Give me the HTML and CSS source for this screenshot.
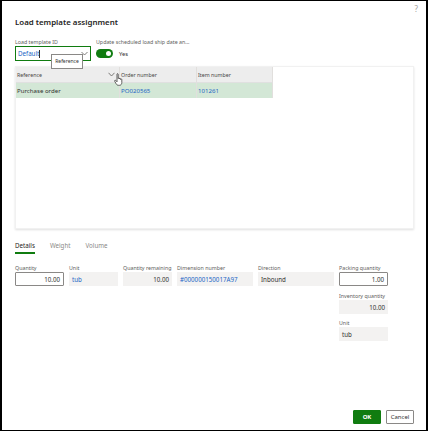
FILE: index.html
```html
<!DOCTYPE html>
<html>
<head>
<meta charset="utf-8">
<link rel="stylesheet" href="styles.css">
</head>
<body>
<div class="dialog">
  <div class="help">?</div>
  <h1 class="title">Load template assignment</h1>
  <div class="top-fields">
    <div class="field f-template">
      <div class="label">Load template ID</div>
      <div class="combo">
        <span class="combo-text">Default</span><span class="caret"></span>
        <svg class="combo-chev" width="7" height="5" viewBox="0 0 7 5"><path d="M0.5 1 L3.5 4 L6.5 1" fill="none" stroke="#605e5c" stroke-width="0.8"/></svg>
      </div>
      <div class="tooltip">Reference</div>
    </div>
    <div class="field f-update">
      <div class="label">Update scheduled load ship date an...</div>
      <div class="toggle-row">
        <span class="toggle"><span class="knob"></span></span>
        <span class="toggle-text">Yes</span>
      </div>
    </div>
  </div>

  <div class="grid">
    <div class="grow head">
      <div class="cell c1">Reference
        <svg class="sort-chev" width="7" height="5" viewBox="0 0 7 5"><path d="M0.5 0.8 L3.5 4 L6.5 0.8" fill="none" stroke="#605e5c" stroke-width="0.8"/></svg>
        <svg class="hand" width="10" height="13" viewBox="0 0 10 13"><path d="M3 1.2 C3 0.5 4.2 0.5 4.2 1.2 L4.2 5.5 C4.2 4.8 5.4 4.8 5.4 5.5 L5.4 6 C5.4 5.3 6.6 5.3 6.6 6 L6.6 6.5 C6.6 5.8 7.8 5.8 7.8 6.5 L7.8 9.5 C7.8 11 7 12.3 5.5 12.3 L4.5 12.3 C3.2 12.3 2.6 11.6 2 10.6 L0.7 8.2 C0.3 7.5 1.2 6.9 1.8 7.5 L3 8.8 Z" fill="#fff" stroke="#3b3a39" stroke-width="0.8" stroke-linejoin="round"/></svg>
      </div>
      <div class="cell c2">Order number</div>
      <div class="cell c3">Item number</div>
    </div>
    <div class="grow sel">
      <div class="cell c1">Purchase order</div>
      <div class="cell c2 link">PO020565</div>
      <div class="cell c3 link">101261</div>
    </div>
  </div>

  <div class="tabs">
    <div class="tab active">Details</div>
    <div class="tab">Weight</div>
    <div class="tab">Volume</div>
  </div>

  <div class="details">
    <div class="col w-s">
      <div class="label">Quantity</div>
      <div class="input num">10.00</div>
    </div>
    <div class="col w-s">
      <div class="label">Unit</div>
      <div class="ro link">tub</div>
    </div>
    <div class="col w-s">
      <div class="label">Quantity remaining</div>
      <div class="ro num">10.00</div>
    </div>
    <div class="col w-l">
      <div class="label">Dimension number</div>
      <div class="ro link">#000000150017A97</div>
    </div>
    <div class="col w-l">
      <div class="label">Direction</div>
      <div class="ro">Inbound</div>
    </div>
    <div class="col w-s stack">
      <div class="label">Packing quantity</div>
      <div class="input num">1.00</div>
      <div class="label gap">Inventory quantity</div>
      <div class="ro num">10.00</div>
      <div class="label gap2">Unit</div>
      <div class="ro">tub</div>
    </div>
  </div>

  <div class="footer">
    <button class="btn primary">OK</button>
    <button class="btn">Cancel</button>
  </div>
</div>
</body>
</html>
```

FILE: styles.css
```css
html, body {
  margin: 0;
  padding: 0;
  background: #fff;
}
body {
  font-family: "Noto Sans", "Open Sans", sans-serif;
  color: #323130;
}
.dialog {
  position: relative;
  box-sizing: border-box;
  width: 428px;
  height: 431px;
  border-style: solid;
  border-color: #000;
  border-width: 1px 2px 1px 2px;
  padding: 14px 12px 6px 13px;
  display: flex;
  flex-direction: column;
}
.help {
  position: absolute;
  top: 2px;
  right: 8px;
  font-size: 8px;
  color: #a19f9d;
}
.title {
  margin: 0;
  font-size: 7.9px;
  line-height: 14px;
  font-weight: 600;
  color: #252423;
}
.label {
  font-size: 5.3px;
  line-height: 8px;
  color: #605e5c;
  white-space: nowrap;
}
.top-fields {
  display: flex;
  gap: 5px;
  margin-top: 9px;
}
.f-template {
  position: relative;
  width: 76px;
}
.combo {
  position: relative;
  box-sizing: border-box;
  height: 15px;
  border: 1px solid #107c10;
  display: flex;
  align-items: center;
  padding-left: 2px;
  font-size: 6.2px;
  color: #2266c5;
}
.caret {
  width: 0.5px;
  height: 8px;
  background: #323130;
}
.combo-chev {
  position: absolute;
  right: 2px;
  top: 4px;
}
.tooltip {
  position: absolute;
  left: 36px;
  top: 16px;
  box-sizing: border-box;
  width: 32px;
  height: 15px;
  background: #fff;
  border: 1px solid #8a8886;
  font-size: 5px;
  line-height: 13px;
  text-align: center;
  color: #323130;
  z-index: 3;
}
.toggle-row {
  display: flex;
  align-items: center;
  gap: 6px;
  height: 15px;
}
.toggle {
  position: relative;
  width: 17px;
  height: 9px;
  border-radius: 5px;
  background: #107c10;
}
.knob {
  position: absolute;
  right: 2px;
  top: 2px;
  width: 5px;
  height: 5px;
  border-radius: 50%;
  background: #fff;
}
.toggle-text {
  font-size: 5.8px;
  color: #323130;
}
.grid {
  margin-top: 5px;
  height: 163px;
  box-sizing: border-box;
  border: 1px solid #f1f1f1;
  box-shadow: 0 1px 2px rgba(0, 0, 0, 0.12);
  background: #fff;
}
.grow {
  display: flex;
  height: 15px;
  width: 257px;
}
.grow.head {
  background: #ededed;
  border-bottom: 0.5px solid #e0e0e0;
}
.grow.sel {
  background: #d3e7d6;
}
.cell {
  box-sizing: border-box;
  display: flex;
  align-items: center;
  padding-left: 1px;
  border-right: 1px solid #e1dfdd;
  font-size: 6.1px;
  white-space: nowrap;
}
.head .cell {
  font-size: 5.3px;
  color: #484644;
}
.c1 {
  position: relative;
  width: 104px;
}
.c2 { width: 77px; }
.c3 { width: 76px; }
.link { color: #2266c5; }
.sort-chev {
  position: absolute;
  right: 4px;
  top: 5px;
}
.hand {
  position: absolute;
  right: -5px;
  top: 6px;
  z-index: 2;
}
.tabs {
  display: flex;
  gap: 15px;
  margin-top: 12px;
}
.tab {
  font-size: 6.2px;
  line-height: 10px;
  color: #8a8886;
  padding-bottom: 1px;
  border-bottom: 2px solid transparent;
}
.tab.active {
  color: #252423;
  border-bottom-color: #107c10;
}
.details {
  display: flex;
  gap: 5px;
  margin-top: 10px;
}
.col {
  display: flex;
  flex-direction: column;
}
.w-s { width: 49px; }
.w-l { width: 76px; }
.input, .ro {
  box-sizing: border-box;
  height: 14px;
  font-size: 6.2px;
  display: flex;
  align-items: center;
  padding: 0 3px;
  white-space: nowrap;
  color: #323130;
}
.input {
  border: 1px solid #8a8886;
  background: #fff;
  border-radius: 1px;
}
.ro {
  background: #f3f2f1;
}
.ro.link { color: #2266c5; }
.num { justify-content: flex-end; }
.gap { margin-top: 6px; }
.gap2 { margin-top: 5px; }
.footer {
  margin-top: auto;
  display: flex;
  justify-content: flex-end;
  gap: 5px;
}
.btn {
  box-sizing: border-box;
  height: 14px;
  padding: 0;
  width: 28px;
  font-family: inherit;
  font-size: 6px;
  background: #fff;
  border: 1px solid #8a8886;
  border-radius: 1px;
  color: #323130;
}
.btn.primary {
  background: #107c10;
  border-color: #107c10;
  color: #fff;
  font-weight: 700;
}
```
